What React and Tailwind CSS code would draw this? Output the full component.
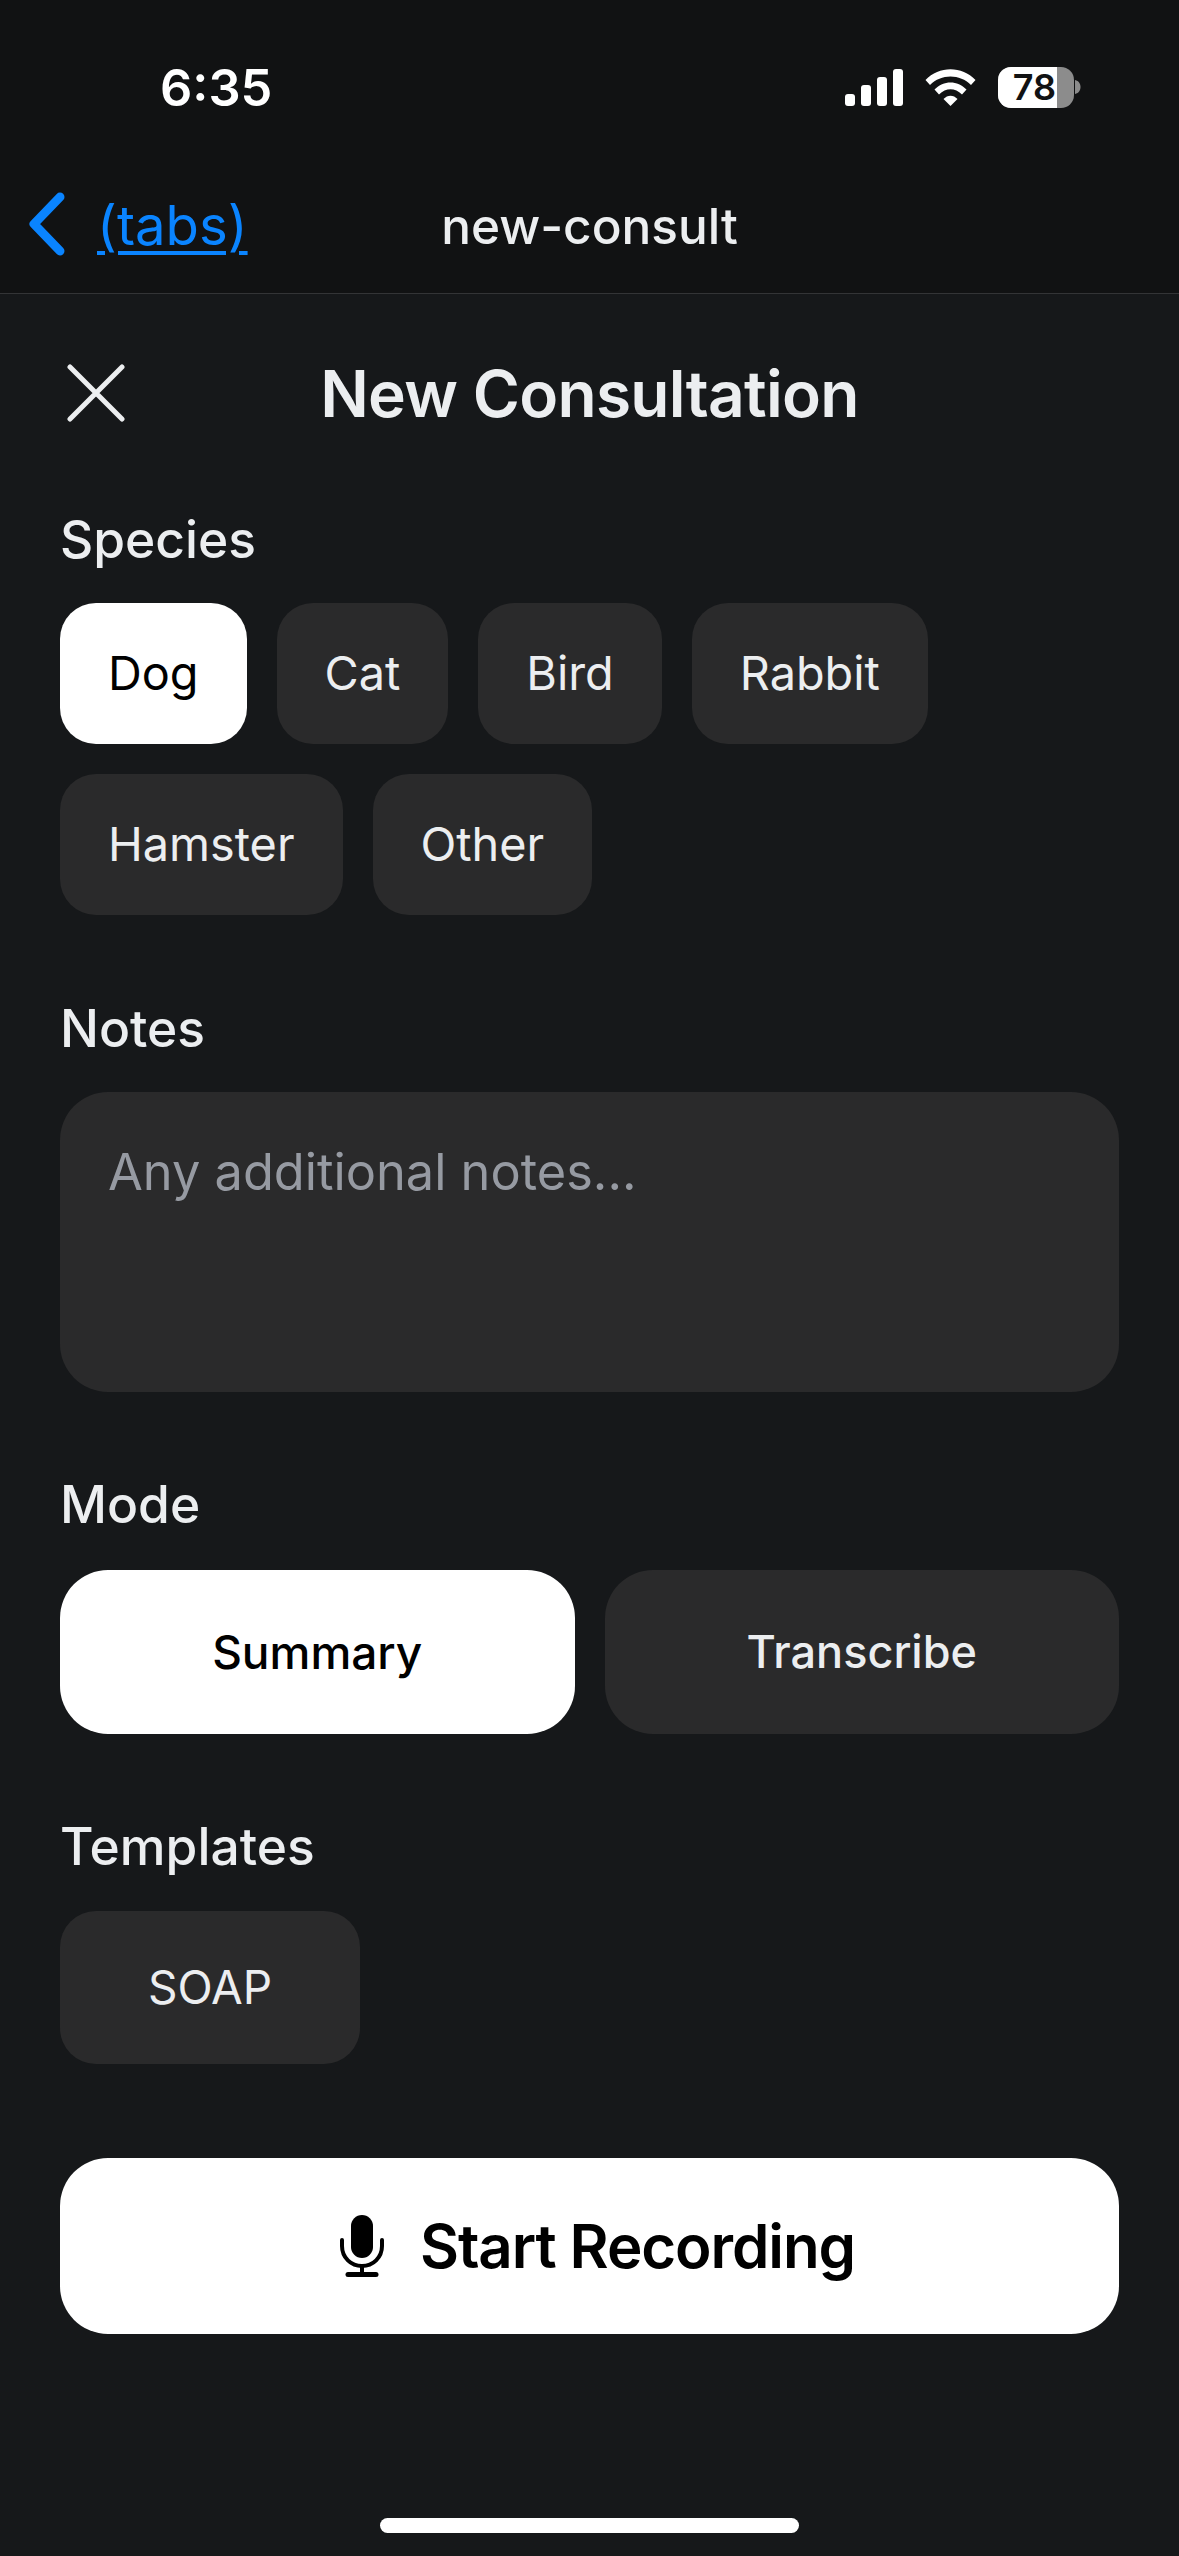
const font = { fontFamily: '"Inter", "Liberation Sans", sans-serif' };

function Chip({ label, active }) {
  return (
    <button className={`h-[141px] px-[48px] rounded-[36px] text-[46.8px] leading-none ${active ? "bg-white text-black" : "bg-[#2a2a2b] text-[#eceef0]"}`}>
      {label}
    </button>
  );
}

function Label({ children, className = "" }) {
  return <div className={`h-[66px] mb-[30px] flex items-center text-[51.5px] font-medium text-[#eceef0] ${className}`}>{children}</div>;
}

function Signal() {
  return (
    <svg width="58" height="37" viewBox="0 0 58 37" fill="#fff">
      <rect x="0" y="25" width="10" height="12" rx="3" />
      <rect x="16" y="16" width="10" height="21" rx="3" />
      <rect x="32" y="8" width="10" height="29" rx="3" />
      <rect x="48" y="0" width="10" height="37" rx="3" />
    </svg>
  );
}

function Wifi() {
  return (
    <svg width="51" height="37" viewBox="0 0 51 37" fill="#fff">
      <path d="M0.5 11 C14 -3.5 37 -3.5 50.5 11 L46 16 C35 4.5 16 4.5 5 16 Z" />
      <path d="M9.5 20.5 C18.5 11 32.5 11 41.5 20.5 L37 25.5 C30 18.5 21 18.5 14 25.5 Z" />
      <path d="M18.5 30 C22.5 25.5 28.5 25.5 32.5 30 L25.5 37 Z" />
    </svg>
  );
}

function Battery() {
  return (
    <div className="flex items-center">
      <div className="w-[76px] h-[41px] rounded-[13px] overflow-hidden flex bg-[#8c8c8c]">
        <div className="w-[59px] h-full bg-white flex items-center justify-end pr-px text-[36px] font-semibold leading-none text-[#111213]">78</div>
      </div>
      <svg width="6" height="14" viewBox="0 0 6 14" className="ml-px" fill="#8c8c8c">
        <path d="M0 0 C4 1 5.500 4 5.500 7 C5.500 10 4 13 0 14 Z" />
      </svg>
    </div>
  );
}

function Mic() {
  return (
    <svg width="44" height="62" viewBox="0 0 44 62" fill="none" stroke="#000">
      <rect x="11" y="0" width="22" height="43" rx="11" fill="#000" stroke="none" />
      <path d="M2 25 V31 C2 42.500 11 51 22 51 C33 51 42 42.500 42 31 V25" strokeWidth="4" strokeLinecap="round" />
      <path d="M22 51 V60" strokeWidth="4" />
      <path d="M8 59.500 H36" strokeWidth="5" strokeLinecap="round" />
    </svg>
  );
}

export default function App() {
  return (
    <div style={font} className="w-[1179px] h-[2556px] bg-[#16181a] flex flex-col overflow-hidden relative">
      <header className="h-[294px] shrink-0 bg-[#111213] border-b border-[#333436]">
        <div className="h-[174px] flex items-center justify-between pl-[160px] pr-[98px]">
          <span className="text-[50.5px] font-semibold text-white leading-none pt-[2px]">6:35</span>
          <div className="flex items-center gap-[22px]">
            <Signal />
            <Wifi />
            <Battery />
          </div>
        </div>
        <div className="h-[106px] grid grid-cols-[1fr_auto_1fr] items-center">
          <div className="flex items-center pl-[29px]">
            <svg width="36" height="64" viewBox="0 0 36 64" fill="none" stroke="#0a84ff" strokeWidth="9" strokeLinecap="round" strokeLinejoin="round" className="mb-[6px]">
              <path d="M31 5 L5 32 L31 59" />
            </svg>
            <span className="ml-[32px] mb-[2px] text-[54.5px] text-[#0a84ff] underline underline-offset-[6px] decoration-[4px]">(tabs)</span>
          </div>
          <span className="text-[49.5px] font-medium text-[#eceef0] leading-none">new-consult</span>
          <div />
        </div>
      </header>

      <main className="flex-1 flex flex-col px-[60px]">
        <div className="h-[198px] mb-[15px] grid grid-cols-[1fr_auto_1fr] items-center">
          <svg width="58" height="58" viewBox="0 0 58 58" fill="none" stroke="#eceef0" strokeWidth="5" strokeLinecap="round" className="ml-[7px]">
            <path d="M3 3 L55 55 M55 3 L3 55" />
          </svg>
          <h1 className="text-[64px] tracking-[-0.7px] font-semibold text-[#eceef0] leading-none pt-[2px]">New Consultation</h1>
          <div />
        </div>

        <Label>Species</Label>
        <div className="flex flex-wrap gap-[30px] mb-[81px]">
          <Chip label="Dog" active />
          <Chip label="Cat" />
          <Chip label="Bird" />
          <Chip label="Rabbit" />
          <Chip label="Hamster" />
          <Chip label="Other" />
        </div>

        <Label>Notes</Label>
        <textarea
          readOnly
          placeholder="Any additional notes..."
          className="h-[300px] mb-[80px] rounded-[48px] bg-[#2a2a2b] px-[48px] pt-[50px] text-[50.5px] leading-[60px] resize-none outline-none placeholder:text-[#969aa2]"
        />

        <Label className="mb-[32px]">Mode</Label>
        <div className="grid grid-cols-2 gap-[30px] mb-[80px]">
          <button className="h-[164px] rounded-[48px] bg-white text-black text-[46px] font-medium">Summary</button>
          <button className="h-[164px] rounded-[48px] bg-[#2a2a2b] text-[#eceef0] text-[45px] font-medium">Transcribe</button>
        </div>

        <Label className="mb-[31px]">Templates</Label>
        <div className="flex mb-[94px]">
          <button className="h-[153px] w-[300px] rounded-[36px] bg-[#2a2a2b] text-[#eceef0] text-[46px]">SOAP</button>
        </div>

        <button className="h-[176px] rounded-[48px] bg-white flex items-center justify-center gap-[36px] pl-[16px]">
          <Mic />
          <span className="text-[60px] tracking-[-1.1px] font-semibold text-black leading-none">Start Recording</span>
        </button>
      </main>

      <div className="absolute left-[380px] top-[2518px] w-[419px] h-[15px] rounded-full bg-white" />
    </div>
  );
}
